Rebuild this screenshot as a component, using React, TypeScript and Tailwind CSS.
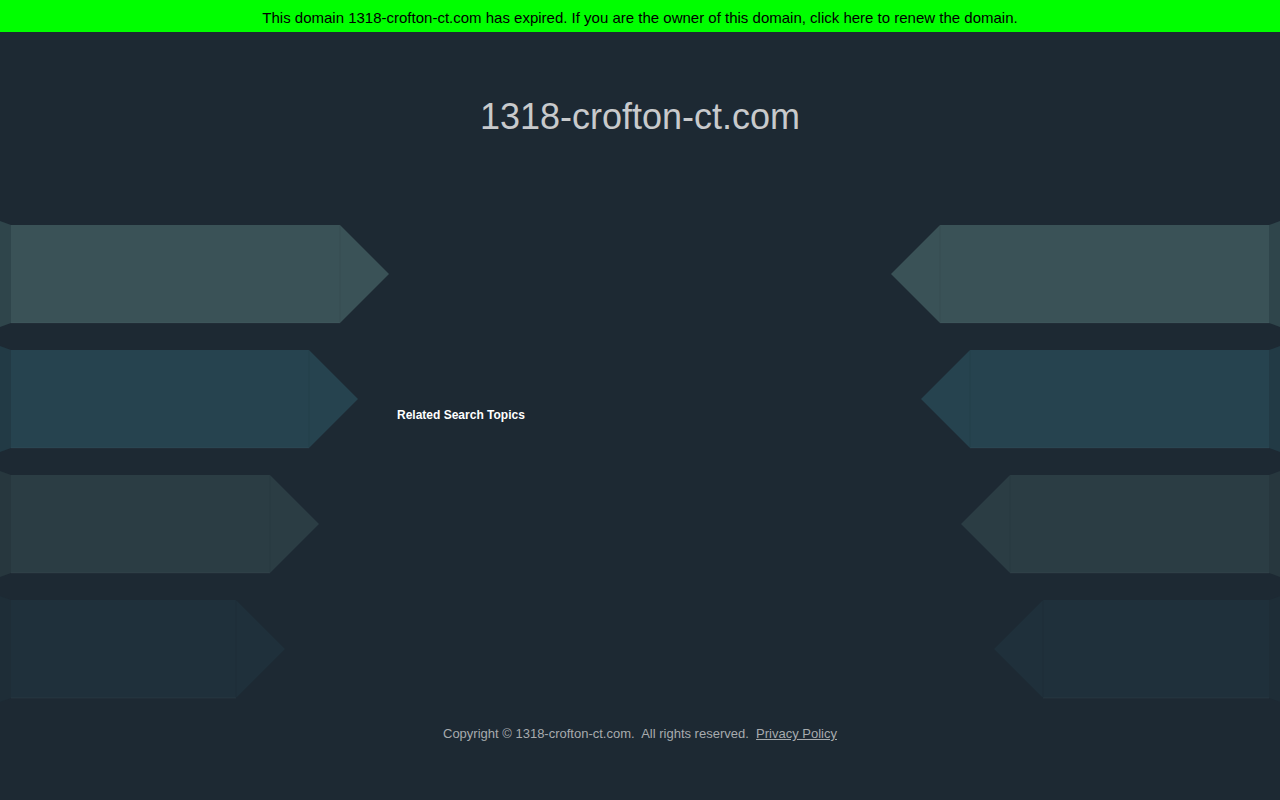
const rows = [
  { body: "#3a5257", side: "#2f454b", leftEnd: 340, rightStart: 50 },
  { body: "#26434f", side: "#223a45", leftEnd: 309, rightStart: 80 },
  { body: "#2b3d44", side: "#27373e", leftEnd: 270, rightStart: 120 },
  { body: "#1f303b", side: "#1e2d37", leftEnd: 236, rightStart: 153 },
];

type ArrowProps = {
  body: string;
  side: string;
  edge: number;
  direction: "left" | "right";
};

// Decorative arrow shapes, drawn in a 390x106 box.
const Arrow = ({ body, side, edge, direction }: ArrowProps) => {
  if (direction === "right") {
    const tip = edge + 49;
    return (
      <svg width={390} height={106} viewBox="0 0 390 106" className="block">
        <polygon points="0,0 11,4 11,102 0,106" fill={side} />
        <polygon points={`11,4 ${edge},4 ${tip},53 ${edge},102 11,102`} fill={body} />
        <line x1={edge} y1={4} x2={edge} y2={102} stroke="#000" strokeOpacity={0.06} />
        <line x1={11} y1={102} x2={edge} y2={102} stroke="#fff" strokeOpacity={0.04} />
      </svg>
    );
  }
  const tip = edge - 49;
  return (
    <svg width={390} height={106} viewBox="0 0 390 106" className="block">
      <polygon points="379,4 390,0 390,106 379,102" fill={side} />
      <polygon points={`${edge},4 379,4 379,102 ${edge},102 ${tip},53`} fill={body} />
      <line x1={edge} y1={4} x2={edge} y2={102} stroke="#000" strokeOpacity={0.06} />
      <line x1={edge} y1={102} x2={379} y2={102} stroke="#fff" strokeOpacity={0.04} />
    </svg>
  );
};

export default function App() {
  return (
    <div className="min-h-screen bg-[#1d2933] font-['Liberation_Sans',Arial,sans-serif]">
      <div className="flex h-8 items-center justify-center bg-[#00ff00] pt-[5px] text-[15px] text-black">
        This domain 1318-crofton-ct.com has expired. If you are the owner of this domain, click here to renew the domain.
      </div>

      <h1 className="pt-[58px] text-center text-[36px] leading-normal text-[#c8cacc]">
        1318-crofton-ct.com
      </h1>

      <div className="mt-[77px] flex">
        <div className="flex w-[390px] flex-col gap-[19px]">
          {rows.map((row, i) => (
            <Arrow key={i} body={row.body} side={row.side} edge={row.leftEnd} direction="right" />
          ))}
        </div>

        <div className="flex-1 pl-[7px] pt-[185px]">
          <p className="text-[12px] font-bold text-white">Related Search Topics</p>
        </div>

        <div className="flex w-[390px] flex-col gap-[19px]">
          {rows.map((row, i) => (
            <Arrow key={i} body={row.body} side={row.side} edge={row.rightStart} direction="left" />
          ))}
        </div>
      </div>

      <footer className="mt-[22px] pb-[60px] text-center text-[13px] text-[#a7abae]">
        Copyright © 1318-crofton-ct.com.&nbsp; All rights reserved.&nbsp;{" "}
        <a className="underline">Privacy Policy</a>
      </footer>
    </div>
  );
}
